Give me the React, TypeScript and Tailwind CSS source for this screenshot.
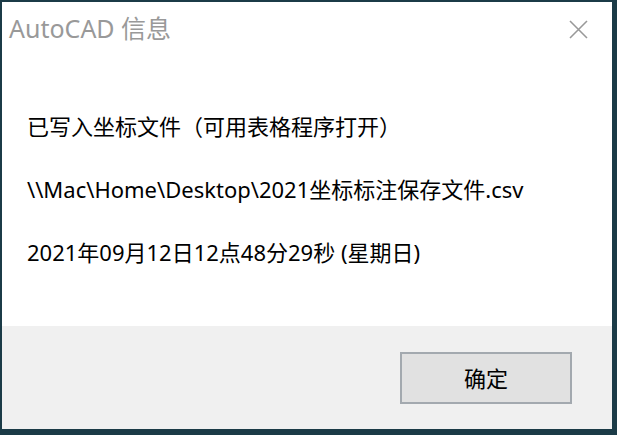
import React from "react";

export default function App() {
  const font = { fontFamily: '"Noto Sans", "Noto Sans CJK SC", sans-serif' };
  return (
    <div className="w-[617px] h-[435px] bg-[#1b3b47] pt-[2px] pl-[2px] pr-[5px] pb-[6px]" style={font}>
      <div className="w-full h-full flex flex-col bg-white">
        <div className="h-[324px] flex flex-col">
          <div className="h-[54px] flex items-start justify-between pl-[7px] pr-[24px]">
            <div className="text-[25px] leading-[54px] text-[#999999] -mt-[1px]">AutoCAD 信息</div>
            <svg width="19" height="19" viewBox="0 0 19 19" className="mt-[18px]">
              <path d="M1 1 L18 18 M18 1 L1 18" stroke="#999999" strokeWidth="1.6" fill="none" />
            </svg>
          </div>
          <div className="flex flex-col pl-[25px] text-[22px] text-black leading-[30px] gap-[33px] pt-[55px]">
            <div>已写入坐标文件（可用表格程序打开）</div>
            <div>\\Mac\Home\Desktop\2021坐标标注保存文件.csv</div>
            <div>2021年09月12日12点48分29秒 (星期日)</div>
          </div>
        </div>
        <div className="flex-1 bg-[#f0f0f0] flex justify-end items-start pt-[26px] pr-[40px]">
          <button className="w-[172px] h-[52px] border-2 border-[#a3a9af] bg-[#e1e1e1] text-[22px] text-black flex items-center justify-center">
            确定
          </button>
        </div>
      </div>
    </div>
  );
}
